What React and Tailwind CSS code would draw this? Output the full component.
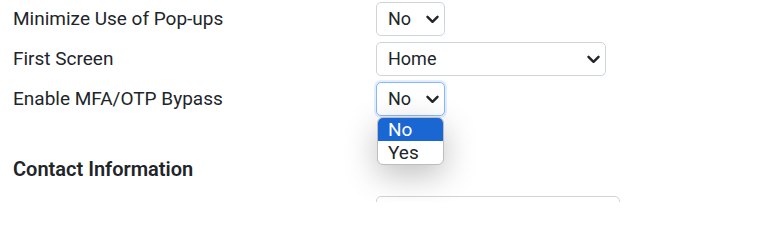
import React from "react";

const rows = [
  { label: "Minimize Use of Pop-ups", value: "No", width: "w-[69px]" },
  { label: "First Screen", value: "Home", width: "w-[230px]" },
  { label: "Enable MFA/OTP Bypass", value: "No", width: "w-[69px]", focused: true },
];

function Chevron() {
  return (
    <svg width="13" height="9" viewBox="0 0 13 9" className="shrink-0">
      <path d="M1.5 1.8 6.5 6.8 11.5 1.8" fill="none" stroke="#212529" strokeWidth="2.4" strokeLinecap="round" strokeLinejoin="round" />
    </svg>
  );
}

function FakeSelect({ value, width, focused }) {
  return (
    <div
      className={`${width} h-[34px] flex items-center justify-between pl-[11px] pr-[5px] rounded-[5px] bg-white border text-[18px] ${
        focused ? "border-[#86b7fe] shadow-[0_0_0_2px_rgba(13,110,253,0.12)]" : "border-[#ced4da]"
      }`}
    >
      <span>{value}</span>
      <Chevron />
    </div>
  );
}

export default function App() {
  return (
    <div className="w-[767px] h-[202px] overflow-hidden bg-white text-[#212529] text-[19px] leading-[24px] font-['Roboto',sans-serif]">
      <div className="pl-[13px] pt-[2px] flex flex-col gap-[6px]">
        {rows.map((row) => (
          <div key={row.label} className="flex items-center">
            <div className="w-[363px]">{row.label}</div>
            <div className="relative">
              <FakeSelect value={row.value} width={row.width} focused={row.focused} />
              {row.focused && (
                <div className="absolute left-[1px] top-[35px] z-10 w-[67px] bg-white rounded-[6px] border border-[#bdbdbd] overflow-hidden shadow-[0_10px_32px_rgba(0,0,0,0.25)] text-[19px] leading-[23px]">
                  <div className="bg-[#1a66d3] text-white pl-[10px]">No</div>
                  <div className="pl-[10px]">Yes</div>
                </div>
              )}
            </div>
          </div>
        ))}
      </div>
      <div className="pl-[13px] mt-[39px] text-[20px] leading-[28px] font-semibold">Contact Information</div>
      <div className="pl-[376px] mt-[13px]">
        <div className="w-[244px] h-[34px] rounded-[5px] border border-[#ced4da] bg-white" />
      </div>
    </div>
  );
}
